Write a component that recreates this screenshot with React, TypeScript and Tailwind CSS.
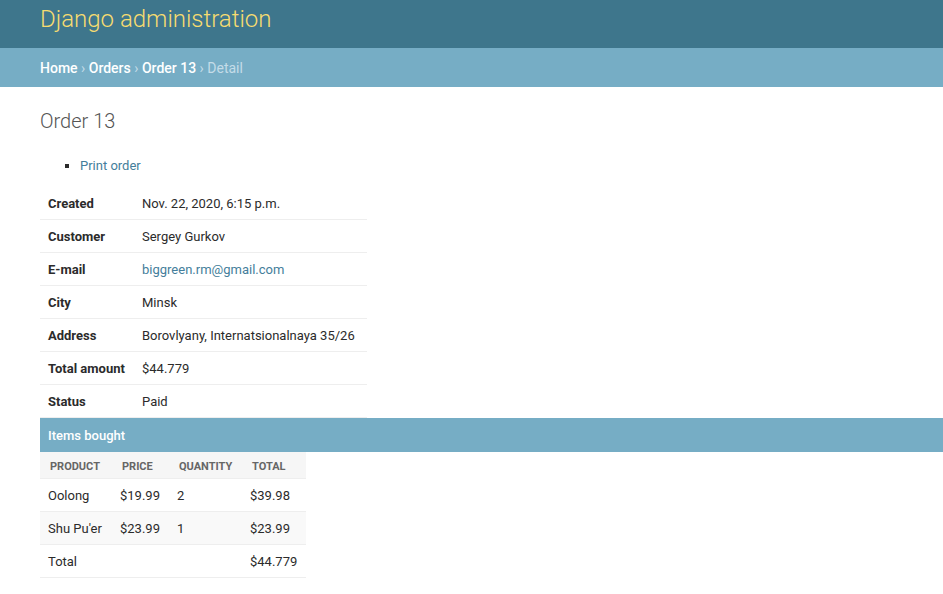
import React from "react";

const details: { label: string; value: string; email?: boolean }[] = [
  { label: "Created", value: "Nov. 22, 2020, 6:15 p.m." },
  { label: "Customer", value: "Sergey Gurkov" },
  { label: "E-mail", value: "biggreen.rm@gmail.com", email: true },
  { label: "City", value: "Minsk" },
  { label: "Address", value: "Borovlyany, Internatsionalnaya 35/26" },
  { label: "Total amount", value: "$44.779" },
  { label: "Status", value: "Paid" },
];

const items = [
  { product: "Oolong", price: "$19.99", quantity: 2, total: "$39.98" },
  { product: "Shu Pu'er", price: "$23.99", quantity: 1, total: "$23.99" },
];

const cell = "px-2 pt-[9px] pb-[7px]";
const columnHead = "px-[10px] pt-[7px] pb-[3px] font-bold";

export default function App() {
  return (
    <div className="min-h-screen bg-white font-['Roboto',sans-serif] text-[13px] leading-4 text-[#2b2b2b]">
      <header className="bg-[#3e768c] px-10 pt-[5px] pb-[15px] text-[#f7dc70]">
        <h1 className="text-2xl leading-7 font-light">Django administration</h1>
      </header>
      <nav
        aria-label="Breadcrumbs"
        className="bg-[#76adc5] px-10 pt-[13px] pb-[11px] text-sm leading-[15px] text-[#c4dce8]"
      >
        <a href="#home" className="font-medium text-white">Home</a> ›{" "}
        <a href="#orders" className="font-medium text-white">Orders</a> ›{" "}
        <a href="#order" className="font-medium text-white">Order 13</a> › Detail
      </nav>
      <main className="pt-5 pl-10">
        <h2 className="mb-[21px] text-xl leading-7 font-light text-[#555]">Order 13</h2>
        <ul className="mb-[11px] list-[square] pl-10 leading-5">
          <li>
            <a href="#print" className="text-[#447e9b]">Print order</a>
          </li>
        </ul>
        <table className="w-[327px] table-fixed border-collapse">
          <colgroup>
            <col className="w-[94px]" />
            <col />
          </colgroup>
          <tbody>
            {details.map((row) => (
              <tr key={row.label} className="border-b border-[#eee]">
                <th scope="row" className={`${cell} text-left font-bold whitespace-nowrap`}>{row.label}</th>
                <td className={cell}>
                  {row.email ? (
                    <a href={`mailto:${row.value}`} className="text-[#447e9b]">{row.value}</a>
                  ) : (
                    row.value
                  )}
                </td>
              </tr>
            ))}
          </tbody>
        </table>
        <section>
          <h2 className="bg-[#76adc5] px-2 pt-[9px] pb-[7px] text-[13px] leading-[18px] font-medium text-white">
            Items bought
          </h2>
          <table className="w-[266px] table-fixed border-collapse">
            <colgroup>
              <col className="w-[72px]" />
              <col className="w-[57px]" />
              <col className="w-[73px]" />
              <col />
            </colgroup>
            <thead>
              <tr className="border-b border-[#eee] bg-[#f6f6f6] text-left text-[11px] leading-4 text-[#666] uppercase">
                <th scope="col" className={columnHead}>Product</th>
                <th scope="col" className={columnHead}>Price</th>
                <th scope="col" className={columnHead}>Quantity</th>
                <th scope="col" className={columnHead}>Total</th>
              </tr>
            </thead>
            <tbody>
              {items.map((item) => (
                <tr key={item.product} className="border-b border-[#eee] even:bg-[#f9f9f9]">
                  <td className={cell}>{item.product}</td>
                  <td className={cell}>{item.price}</td>
                  <td className={cell}>{item.quantity}</td>
                  <td className={cell}>{item.total}</td>
                </tr>
              ))}
              <tr className="border-b border-[#eee]">
                <td colSpan={3} className={cell}>Total</td>
                <td className={cell}>$44.779</td>
              </tr>
            </tbody>
          </table>
        </section>
      </main>
    </div>
  );
}
